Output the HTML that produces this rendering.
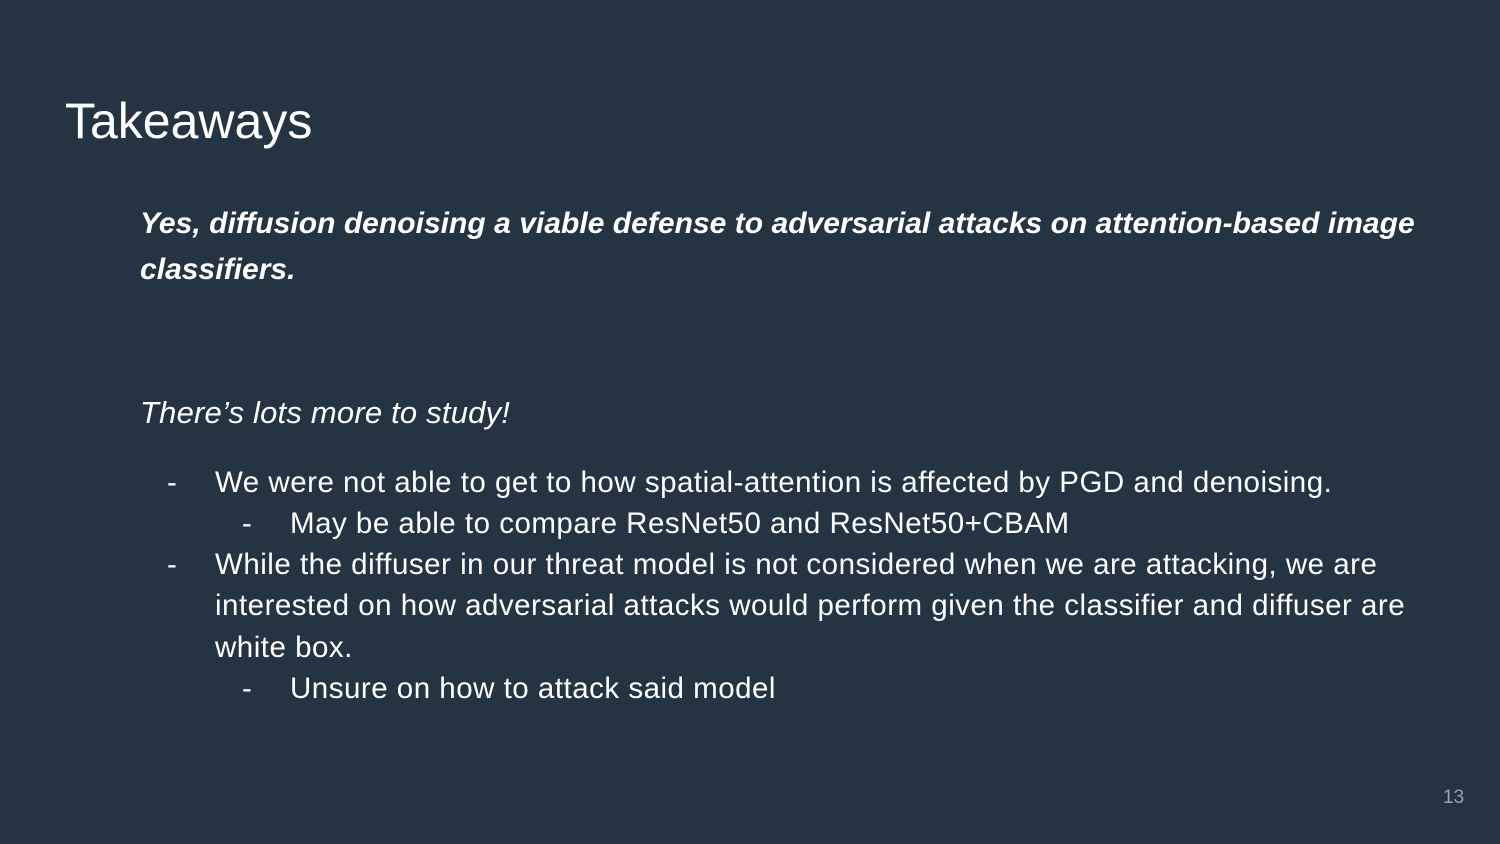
<!DOCTYPE html>
<html><head><style>
body{margin:0;width:1500px;height:844px;background:#243442;overflow:hidden;font-family:"Liberation Sans",sans-serif;color:#fff;position:relative}
div{position:absolute;white-space:nowrap;line-height:1}
.b{font-size:30px;font-weight:bold;font-style:italic;letter-spacing:0.03px}
.t{font-size:29.5px;letter-spacing:0.5px}
</style></head><body>
<div style="left:65px;top:96px;font-size:50px;">Takeaways</div>
<div class="b" style="left:140px;top:209px;">Yes, diffusion denoising a viable defense to adversarial attacks on attention-based image</div>
<div class="b" style="left:140px;top:255px;">classifiers.</div>
<div class="t" style="left:140px;top:397px;font-style:italic;font-size:31px;letter-spacing:0.2px;">There’s lots more to study!</div>
<div class="t" style="left:167px;top:468px;">-</div>
<div class="t" style="left:215px;top:468px;">We were not able to get to how spatial-attention is affected by PGD and denoising.</div>
<div class="t" style="left:242px;top:509px;">-</div>
<div class="t" style="left:290px;top:509px;">May be able to compare ResNet50 and ResNet50+CBAM</div>
<div class="t" style="left:167px;top:550px;">-</div>
<div class="t" style="left:215px;top:550px;">While the diffuser in our threat model is not considered when we are attacking, we are</div>
<div class="t" style="left:215px;top:591px;">interested on how adversarial attacks would perform given the classifier and diffuser are</div>
<div class="t" style="left:215px;top:633px;">white box.</div>
<div class="t" style="left:242px;top:674px;">-</div>
<div class="t" style="left:290px;top:674px;">Unsure on how to attack said model</div>
<div style="left:1443px;top:788px;font-size:19px;color:#9aa3ab;">13</div>
</body></html>
